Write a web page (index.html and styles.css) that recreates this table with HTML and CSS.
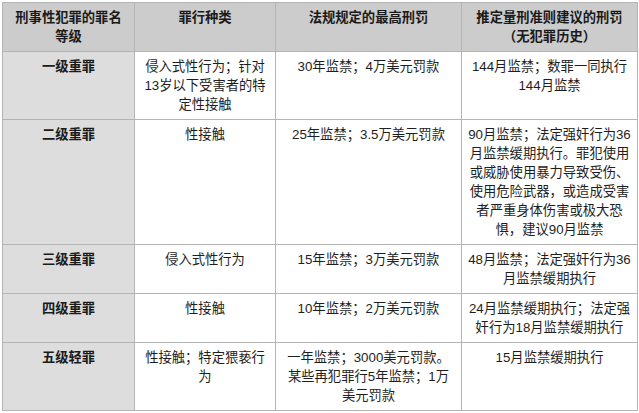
FILE: index.html
```html
<!DOCTYPE html>
<html lang="zh-CN">
<head>
<meta charset="utf-8">
<title>刑事性犯罪的罪名等级</title>
<link rel="stylesheet" href="styles.css">
</head>
<body>
<table class="grid">
  <colgroup>
    <col class="c1">
    <col class="c2">
    <col class="c3">
    <col class="c4">
  </colgroup>
  <thead>
    <tr>
      <th class="grade-col">刑事性犯罪的罪名等级</th>
      <th>罪行种类</th>
      <th>法规规定的最高刑罚</th>
      <th class="advice">推定量刑准则建议的刑罚<br>（无犯罪历史）</th>
    </tr>
  </thead>
  <tbody>
    <tr>
      <th class="grade grade-col">一级重罪</th>
      <td>侵入式性行为；针对13岁以下受害者的特定性接触</td>
      <td>30年监禁；4万美元罚款</td>
      <td class="advice">144月监禁；数罪一同执行144月监禁</td>
    </tr>
    <tr>
      <th class="grade grade-col">二级重罪</th>
      <td>性接触</td>
      <td>25年监禁；3.5万美元罚款</td>
      <td class="advice">90月监禁；法定强奸行为36月监禁缓期执行。罪犯使用或威胁使用暴力导致受伤、使用危险武器，或造成受害者严重身体伤害或极大恐惧，建议90月监禁</td>
    </tr>
    <tr>
      <th class="grade grade-col">三级重罪</th>
      <td>侵入式性行为</td>
      <td>15年监禁；3万美元罚款</td>
      <td class="advice">48月监禁；法定强奸行为36月监禁缓期执行</td>
    </tr>
    <tr>
      <th class="grade grade-col">四级重罪</th>
      <td>性接触</td>
      <td>10年监禁；2万美元罚款</td>
      <td class="advice">24月监禁缓期执行；法定强奸行为18月监禁缓期执行</td>
    </tr>
    <tr>
      <th class="grade grade-col">五级轻罪</th>
      <td>性接触；特定猥亵行为</td>
      <td>一年监禁；3000美元罚款。某些再犯罪行5年监禁；1万美元罚款</td>
      <td class="advice">15月监禁缓期执行</td>
    </tr>
  </tbody>
</table>
</body>
</html>
```

FILE: styles.css
```css
html, body {
  margin: 0;
  padding: 0;
  background: #ffffff;
}

body {
  padding: 2px 0 0 2px;
  font-family: "Liberation Sans", "Noto Sans CJK SC", sans-serif;
  font-size: 13.3px;
  color: #1e1e1e;
}

.grid {
  border-collapse: collapse;
  table-layout: fixed;
  width: 635px;
}

.c1 { width: 132px; }
.c2 { width: 141px; }
.c3 { width: 186px; }
.c4 { width: 176px; }

.grid th,
.grid td {
  border: 1px solid #b4b4b4;
  padding: 5px 6px;
  line-height: 19px;
  text-align: center;
  vertical-align: top;
}

.grid .grade-col {
  padding-left: 7px;
  padding-right: 7px;
}

.grid .advice {
  padding-left: 5px;
  padding-right: 5px;
}

.grid thead th {
  background: #cccccc;
  font-weight: bold;
  color: #1a1a1a;
}

.grid .grade {
  background: #dddddd;
  font-weight: bold;
  color: #1a1a1a;
}

.grid td {
  background: #ffffff;
  font-weight: normal;
}
```
